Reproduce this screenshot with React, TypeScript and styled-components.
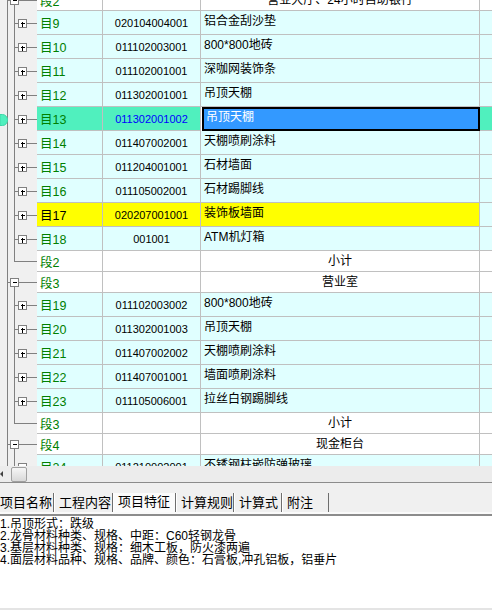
import * as React from "react"
import styled, { createGlobalStyle } from "styled-components"

const FONT = `"Liberation Sans", "Noto Sans CJK SC", sans-serif`

const COLORS = {
    grid: "#c0c0c0",
    item: "#e0ffff",
    selected: "#50f0be",
    selectedCell: "#3399ff",
    yellow: "#ffff00",
    green: "#008000",
    tree: "#808080",
    panel: "#f0f0f0",
    dark: "#8c8c8c"
}

type RowKind = "item" | "open" | "end"
type Tone = "normal" | "selected" | "yellow"

interface RowData {
    kind: RowKind
    label: string
    code?: string
    name?: string
    tone?: Tone
}

const rows: RowData[] = [
    { kind: "open", label: "段2", name: "营业大厅、24小时自助银行" },
    { kind: "item", label: "目9", code: "020104004001", name: "铝合金刮沙垫" },
    { kind: "item", label: "目10", code: "011102003001", name: "800*800地砖" },
    { kind: "item", label: "目11", code: "011102001001", name: "深咖网装饰条" },
    { kind: "item", label: "目12", code: "011302001001", name: "吊顶天棚" },
    { kind: "item", label: "目13", code: "011302001002", name: "吊顶天棚", tone: "selected" },
    { kind: "item", label: "目14", code: "011407002001", name: "天棚喷刷涂料" },
    { kind: "item", label: "目15", code: "011204001001", name: "石材墙面" },
    { kind: "item", label: "目16", code: "011105002001", name: "石材踢脚线" },
    { kind: "item", label: "目17", code: "020207001001", name: "装饰板墙面", tone: "yellow" },
    { kind: "item", label: "目18", code: "001001", name: "ATM机灯箱" },
    { kind: "end", label: "段2", name: "小计" },
    { kind: "open", label: "段3", name: "营业室" },
    { kind: "item", label: "目19", code: "011102003002", name: "800*800地砖" },
    { kind: "item", label: "目20", code: "011302001003", name: "吊顶天棚" },
    { kind: "item", label: "目21", code: "011407002002", name: "天棚喷刷涂料" },
    { kind: "item", label: "目22", code: "011407001001", name: "墙面喷刷涂料" },
    { kind: "item", label: "目23", code: "011105006001", name: "拉丝白钢踢脚线" },
    { kind: "end", label: "段3", name: "小计" },
    { kind: "open", label: "段4", name: "现金柜台" },
    { kind: "item", label: "目24", code: "011210002001", name: "不锈钢柱嵌防弹玻璃" }
]

const tabs = [
    { title: "项目名称", width: 59 },
    { title: "工程内容", width: 59 },
    { title: "项目特征", width: 63, active: true },
    { title: "计算规则", width: 58 },
    { title: "计算式", width: 48 },
    { title: "附注", width: 47 }
]

const features = [
    "1.吊顶形式：跌级",
    "2.龙骨材料种类、规格、中距：C60轻钢龙骨",
    "3.基层材料种类、规格：细木工板，防火漆两遍",
    "4.面层材料品种、规格、品牌、颜色：石膏板,冲孔铝板，铝垂片"
]

const rowHeight = (kind: RowKind) => (kind === "item" ? 24 : 21)

const TreeGlyph: React.FC<{ kind: RowKind; height: number; marked?: boolean }> = ({
    kind,
    height,
    marked
}) => {
    const mid = kind === "item" ? 12.5 : 10.5
    return (
        <svg width={37} height={height} shapeRendering="crispEdges">
            <line x1={7.5} y1={0} x2={7.5} y2={height} stroke={COLORS.tree} />
            {kind === "item" && (
                <g stroke={COLORS.tree}>
                    <line x1={14.5} y1={0} x2={14.5} y2={height} />
                    <line x1={14.5} y1={mid} x2={18.5} y2={mid} />
                    <line x1={26.5} y1={mid} x2={37} y2={mid} />
                    <rect x={18.5} y={mid - 4} width={8} height={8} fill="#fff" />
                    <line x1={20.5} y1={mid} x2={25} y2={mid} stroke="#000" />
                    <line x1={22.5} y1={mid - 2} x2={22.5} y2={mid + 3} stroke="#000" />
                </g>
            )}
            {kind === "open" && (
                <g stroke={COLORS.tree}>
                    <line x1={7.5} y1={mid} x2={10.5} y2={mid} />
                    <line x1={18.5} y1={mid} x2={37} y2={mid} />
                    <line x1={14.5} y1={mid + 4} x2={14.5} y2={height} />
                    <rect x={10.5} y={mid - 4} width={8} height={8} fill="#fff" />
                    <line x1={12.5} y1={mid} x2={17} y2={mid} stroke="#000" />
                </g>
            )}
            {kind === "end" && (
                <g stroke={COLORS.tree}>
                    <line x1={14.5} y1={0} x2={14.5} y2={mid} />
                    <line x1={14.5} y1={mid} x2={37} y2={mid} />
                </g>
            )}
            {marked && (
                <path
                    d="M0 7.5 H2.5 A5 5.5 0 0 1 2.5 18.5 H0 Z"
                    fill={COLORS.selected}
                    stroke="#3cd8a8"
                    shapeRendering="auto"
                />
            )}
        </svg>
    )
}

const App: React.FC = () => {
    return (
        <Page>
            <GlobalStyle />
            <GridViewport>
                <GridBody>
                    {rows.map((row, i) => {
                        const tone = row.tone || "normal"
                        const group = row.kind !== "item"
                        return (
                            <Row key={i} $height={rowHeight(row.kind)}>
                                <TreeCell>
                                    <TreeGlyph
                                        kind={row.kind}
                                        height={rowHeight(row.kind)}
                                        marked={tone === "selected"}
                                    />
                                </TreeCell>
                                <LabelCell $group={group} $tone={tone}>
                                    {row.label}
                                </LabelCell>
                                <CodeCell $group={group} $tone={tone}>
                                    {row.code}
                                </CodeCell>
                                <NameCell $group={group} $tone={tone}>
                                    {row.name}
                                </NameCell>
                                <TailCell $group={group} $tone={tone} />
                            </Row>
                        )
                    })}
                </GridBody>
            </GridViewport>
            <ScrollBar>
                <ScrollArrow />
                <ScrollThumb />
            </ScrollBar>
            <Splitter />
            <TabStrip>
                {tabs.map(tab => (
                    <Tab key={tab.title} $width={tab.width} $active={!!tab.active}>
                        {tab.title}
                    </Tab>
                ))}
            </TabStrip>
            <FeaturePanel>
                {features.map(line => (
                    <FeatureLine key={line}>{line}</FeatureLine>
                ))}
            </FeaturePanel>
        </Page>
    )
}

export default App

const GlobalStyle = createGlobalStyle`
    html, body {
        margin: 0;
        padding: 0;
        background: #fff;
        overflow: hidden;
    }
`

const Page = styled.div`
    width: 492px;
    height: 610px;
    display: flex;
    flex-direction: column;
    font-family: ${FONT};
    font-size: 12px;
    color: #000;
    background: ${COLORS.panel};
    overflow: hidden;
`

const GridViewport = styled.div`
    height: 466px;
    flex: none;
    overflow: hidden;
    background: #fff;
`

const GridBody = styled.div`
    margin-top: -10px;
`

const Row = styled.div<{ $height: number }>`
    display: grid;
    grid-template-columns: 37px 66px 98px 279px 12px;
    height: ${p => p.$height}px;
`

const TreeCell = styled.div`
    background: ${COLORS.panel};
    line-height: 0;
`

interface CellProps {
    $group: boolean
    $tone: Tone
}

const toneBg = (p: CellProps) => {
    if (p.$group) return "#fff"
    if (p.$tone === "selected") return COLORS.selected
    if (p.$tone === "yellow") return COLORS.yellow
    return COLORS.item
}

const Cell = styled.div<CellProps>`
    box-sizing: border-box;
    border-right: 1px solid ${COLORS.grid};
    border-bottom: 1px solid ${COLORS.grid};
    background: ${toneBg};
    white-space: nowrap;
    overflow: hidden;
`

const LabelCell = styled(Cell)`
    display: flex;
    align-items: center;
    padding-left: 3px;
    font-size: 12.5px;
    color: ${p => (p.$tone === "yellow" ? "#000" : COLORS.green)};
`

const CodeCell = styled(Cell)`
    display: flex;
    align-items: center;
    justify-content: center;
    padding-top: 1px;
    font-size: 11px;
    color: ${p => (p.$tone === "selected" ? "#0000ff" : "#000")};
`

const NameCell = styled(Cell)`
    display: flex;
    align-items: ${p => (p.$group ? "center" : "flex-start")};
    justify-content: ${p => (p.$group ? "center" : "flex-start")};
    padding: ${p => (p.$group ? "0" : "2px 0 0 3px")};
    line-height: 16px;
    ${p =>
        p.$tone === "selected" &&
        `
        background: ${COLORS.selectedCell};
        color: #fff;
        border: 2px solid #000;
        margin-left: 1px;
        padding: 0 0 0 2px;
    `}
`

const TailCell = styled(Cell)`
    border-right: none;
    background: ${p => (p.$tone === "yellow" ? COLORS.item : toneBg(p))};
`

const ScrollBar = styled.div`
    height: 16px;
    flex: none;
    display: flex;
    align-items: center;
    background: #ececec;
`

const ScrollArrow = styled.div`
    width: 0;
    height: 0;
    border-top: 3px solid transparent;
    border-bottom: 3px solid transparent;
    border-right: 3px solid #404040;
`

const ScrollThumb = styled.div`
    box-sizing: border-box;
    width: 16px;
    height: 15px;
    margin-left: 8px;
    border: 1px solid #a0a0a0;
    border-radius: 2px;
    background: linear-gradient(#f6f6f6, #d8d8d8);
`

const Splitter = styled.div`
    height: 11px;
    flex: none;
    box-sizing: border-box;
    border-top: 1px solid ${COLORS.dark};
    background: ${COLORS.panel};
`

const TabStrip = styled.div`
    display: flex;
    height: 19px;
    flex: none;
    margin-left: -5px;
    border-bottom: 2px solid #fafafa;
`

const Tab = styled.div<{ $width: number; $active: boolean }>`
    box-sizing: border-box;
    width: ${p => p.$width}px;
    padding-left: 5px;
    font-size: 13px;
    line-height: ${p => (p.$active ? "17px" : "19px")};
    border-right: 1px solid #6e6e6e;
    box-shadow: inset 1px 0 #fff;
    background: ${p => (p.$active ? "#fbfbfb" : COLORS.panel)};
    white-space: nowrap;
`

const FeaturePanel = styled.div`
    flex: 1;
    background: #fff;
    border-top: 2px solid ${COLORS.dark};
    border-bottom: 2px solid #e4e4e4;
    padding-top: 2px;
`

const FeatureLine = styled.div`
    font-size: 12px;
    line-height: 12px;
    white-space: nowrap;
`
